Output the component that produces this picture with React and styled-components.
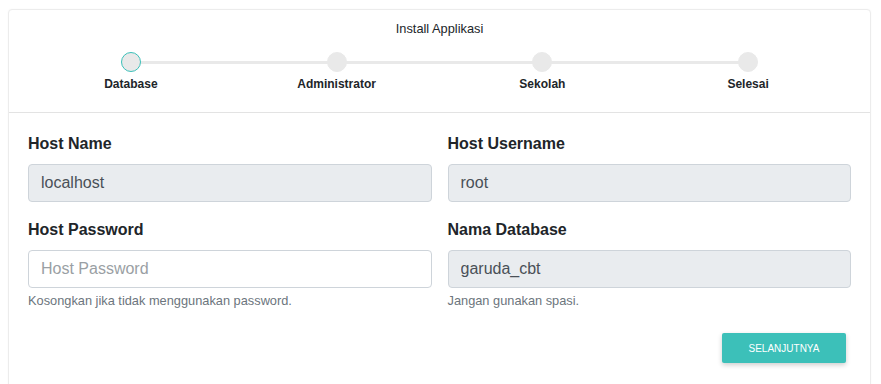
import React from "react";
import styled, { createGlobalStyle } from "styled-components";

const GlobalStyle = createGlobalStyle`
  * { box-sizing: border-box; }
  body {
    margin: 0;
    background: #ffffff;
    font-family: "Liberation Sans", Arial, sans-serif;
    color: #212529;
  }
`;

const steps = ["Database", "Administrator", "Sekolah", "Selesai"];

const App = () => {
  return (
    <Page>
      <GlobalStyle />
      <Card>
        <CardHeader>
          <Title>Install Applikasi</Title>
          <Stepper>
            {steps.map((step, i) => (
              <Step key={step} first={i === 0} last={i === steps.length - 1}>
                <Dot active={i === 0} />
                <StepLabel>{step}</StepLabel>
              </Step>
            ))}
          </Stepper>
        </CardHeader>
        <CardBody>
          <FormGrid>
            <FormGroup>
              <Label>Host Name</Label>
              <Input readOnly value="localhost" />
            </FormGroup>
            <FormGroup>
              <Label>Host Username</Label>
              <Input readOnly value="root" />
            </FormGroup>
            <FormGroup>
              <Label>Host Password</Label>
              <Input editable placeholder="Host Password" />
              <Help>Kosongkan jika tidak menggunakan password.</Help>
            </FormGroup>
            <FormGroup>
              <Label>Nama Database</Label>
              <Input readOnly value="garuda_cbt" />
              <Help>Jangan gunakan spasi.</Help>
            </FormGroup>
          </FormGrid>
          <Actions>
            <NextButton>Selanjutnya</NextButton>
          </Actions>
        </CardBody>
      </Card>
    </Page>
  );
};

export default App;

const Page = styled.div`
  padding: 9px 10px 0 8px;
`;

const Card = styled.div`
  border: 1px solid #ececec;
  border-radius: 4px;
  background: #fff;
  box-shadow: 0 0 2px rgba(0, 0, 0, 0.04);
`;

const CardHeader = styled.div`
  padding: 10px 19px 19px 19px;
  border-bottom: 1px solid #e3e3e3;
`;

const Title = styled.div`
  text-align: center;
  font-size: 12.8px;
  line-height: 18px;
  color: #212529;
  margin-bottom: 14px;
`;

const Stepper = styled.div`
  display: grid;
  grid-template-columns: repeat(4, 1fr);
`;

const Step = styled.div`
  position: relative;
  display: flex;
  flex-direction: column;
  align-items: center;

  &::before {
    content: "";
    position: absolute;
    top: 9px;
    height: 3px;
    background: #e9e9e9;
    left: ${(p) => (p.first ? "50%" : "0")};
    right: ${(p) => (p.last ? "50%" : "0")};
  }
`;

const Dot = styled.div`
  position: relative;
  z-index: 1;
  width: 20px;
  height: 20px;
  border-radius: 50%;
  background: #e9e9e9;
  border: ${(p) => (p.active ? "1px solid #3cc0b9" : "1px solid #e9e9e9")};
`;

const StepLabel = styled.div`
  margin-top: 3px;
  font-size: 12px;
  line-height: 18px;
  font-weight: 700;
  color: #212529;
`;

const CardBody = styled.div`
  padding: 19px 19px 40px 19px;
`;

const FormGrid = styled.div`
  display: grid;
  grid-template-columns: 1fr 1fr;
  column-gap: 16px;
  row-gap: 16px;
`;

const FormGroup = styled.div`
  display: flex;
  flex-direction: column;
`;

const Label = styled.label`
  font-size: 16px;
  line-height: 24px;
  font-weight: 700;
  color: #212529;
  margin-bottom: 8px;
`;

const Input = styled.input`
  height: 38px;
  padding: 6px 12px;
  font-family: "Liberation Sans", Arial, sans-serif;
  font-size: 16px;
  color: #495057;
  background: ${(p) => (p.editable ? "#fff" : "#e9ecef")};
  border: 1px solid #ced4da;
  border-radius: 4px;
  outline: none;

  &::placeholder {
    color: #9a9fa4;
  }
`;

const Help = styled.small`
  margin-top: 5px;
  font-size: 12.8px;
  line-height: 16px;
  color: #6c757d;
`;

const Actions = styled.div`
  display: flex;
  justify-content: flex-end;
  padding-right: 5px;
  margin-top: 24px;
`;

const NextButton = styled.button`
  width: 124px;
  height: 30px;
  border: none;
  border-radius: 2px;
  background: #3cc0b9;
  color: #fff;
  font-family: "Liberation Sans", Arial, sans-serif;
  font-size: 10px;
  text-transform: uppercase;
  box-shadow: 0 2px 5px rgba(0, 0, 0, 0.2);
  cursor: pointer;
`;
